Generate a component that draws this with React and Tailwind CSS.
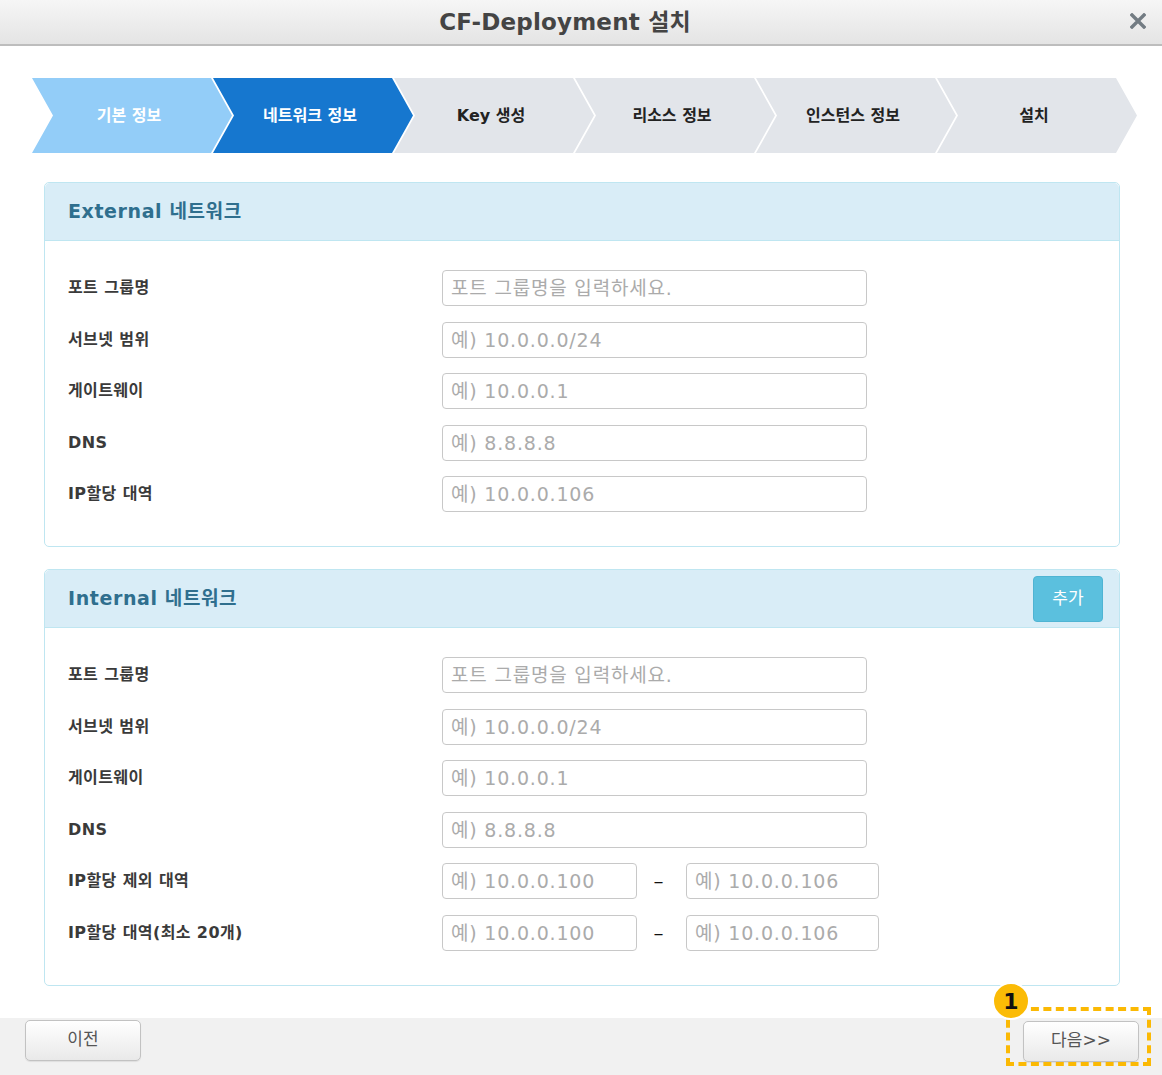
import React from 'react';

const steps = [
  { label: '기본 정보', bg: 'bg-[#93cdf8]', text: 'text-white' },
  { label: '네트워크 정보', bg: 'bg-[#1677cf]', text: 'text-white' },
  { label: 'Key 생성', bg: 'bg-[#e2e5ea]', text: 'text-[#222]' },
  { label: '리소스 정보', bg: 'bg-[#e2e5ea]', text: 'text-[#222]' },
  { label: '인스턴스 정보', bg: 'bg-[#e2e5ea]', text: 'text-[#222]' },
  { label: '설치', bg: 'bg-[#e2e5ea]', text: 'text-[#222]' },
];

const FONT = "font-['DejaVu_Sans','Noto_Sans_CJK_KR',sans-serif]";

const Field = ({ placeholder, width = 'w-[425px]' }) => (
  <input
    readOnly
    placeholder={placeholder}
    className={`${width} h-[36px] rounded-[4px] border border-[#c8c8c8] bg-white pl-[8px] text-[19px] tracking-[0.8px] outline-none placeholder:text-[#ababab] ${FONT}`}
  />
);

const Row = ({ label, children }) => (
  <div className="flex items-center">
    <div className={`w-[374px] text-[16px] font-bold text-[#3a3a3a] tracking-[0.4px] ${FONT}`}>{label}</div>
    {children}
  </div>
);

const RangeRow = ({ label }) => (
  <Row label={label}>
    <Field placeholder="예) 10.0.0.100" width="w-[195px]" />
    <div className="w-[49px] pr-[6px] text-center text-[20px] leading-none text-[#111]">–</div>
    <Field placeholder="예) 10.0.0.106" width="w-[193px]" />
  </Row>
);

const Panel = ({ title, action, children }) => (
  <div className="ml-[44px] w-[1076px] rounded-[5px] border border-[#bfe6f1] bg-white">
    <div className="flex h-[58px] items-center justify-between rounded-t-[5px] border-b border-[#bfe6f1] bg-[#d9edf7] pl-[23px] pr-[16px]">
      <div className={`text-[19px] font-bold text-[#2f6f8e] tracking-[0.6px] ${FONT}`}>{title}</div>
      {action}
    </div>
    <div className="flex flex-col gap-[15.5px] pl-[23px] pt-[29px] pb-[34px]">{children}</div>
  </div>
);

export default function App() {
  return (
    <div className={`relative h-[1075px] w-[1162px] overflow-hidden bg-white ${FONT}`}>
      {/* Title bar */}
      <div className="relative flex h-[46px] items-center justify-center border-b-2 border-[#bdbdbd] bg-gradient-to-b from-[#f6f6f6] to-[#e4e4e4] pr-[32px]">
        <div className="text-[23px] font-bold text-[#444] tracking-[0.2px]">CF-Deployment 설치</div>
        <svg className="absolute right-[16px] top-[13px]" width="16" height="16" viewBox="0 0 16 16">
          <path d="M2 2 L14 14 M14 2 L2 14" stroke="#737c83" strokeWidth="3.4" strokeLinecap="square" />
        </svg>
      </div>

      {/* Steps */}
      <div className="mt-[32px] flex pl-[32px]">
        {steps.map((s, i) => (
          <div
            key={s.label}
            className={`flex h-[75px] w-[200px] shrink-0 items-center justify-center ${s.bg} ${i > 0 ? '-ml-[19px]' : ''} [clip-path:polygon(0_0,179px_0,200px_50%,179px_100%,0_100%,21px_50%)]`}
          >
            <span className={`pr-[6px] text-[16px] font-bold ${s.text}`}>{s.label}</span>
          </div>
        ))}
      </div>

      {/* External */}
      <div className="mt-[29px]">
        <Panel title="External 네트워크">
          <Row label="포트 그룹명"><Field placeholder="포트 그룹명을 입력하세요." /></Row>
          <Row label="서브넷 범위"><Field placeholder="예) 10.0.0.0/24" /></Row>
          <Row label="게이트웨이"><Field placeholder="예) 10.0.0.1" /></Row>
          <Row label="DNS"><Field placeholder="예) 8.8.8.8" /></Row>
          <Row label="IP할당 대역"><Field placeholder="예) 10.0.0.106" /></Row>
        </Panel>
      </div>

      {/* Internal */}
      <div className="mt-[22px]">
        <Panel
          title="Internal 네트워크"
          action={
            <button className="h-[46px] w-[70px] rounded-[4px] border border-[#4fb4d3] bg-[#5bc0de] text-[17px] text-white">
              추가
            </button>
          }
        >
          <Row label="포트 그룹명"><Field placeholder="포트 그룹명을 입력하세요." /></Row>
          <Row label="서브넷 범위"><Field placeholder="예) 10.0.0.0/24" /></Row>
          <Row label="게이트웨이"><Field placeholder="예) 10.0.0.1" /></Row>
          <Row label="DNS"><Field placeholder="예) 8.8.8.8" /></Row>
          <RangeRow label="IP할당 제외 대역" />
          <RangeRow label="IP할당 대역(최소 20개)" />
        </Panel>
      </div>

      {/* Footer */}
      <div className="mt-[32px] flex h-[60px] items-start justify-between bg-[#f1f1f1] px-[23px] pt-[2px]">
        <button className="ml-[2px] h-[41px] w-[116px] rounded-[5px] border border-[#c2c2c2] bg-gradient-to-b from-white to-[#e9e9e9] text-[17px] text-[#555] shadow-[0_1px_1px_rgba(0,0,0,0.08)]">
          이전
        </button>
        <button className="mt-[1px] h-[41px] w-[116px] rounded-[5px] border border-[#c2c2c2] bg-gradient-to-b from-white to-[#e9e9e9] text-[17px] text-[#555] shadow-[0_1px_1px_rgba(0,0,0,0.08)]">
          다음&gt;&gt;
        </button>
      </div>

      {/* Highlight */}
      <div className="absolute left-[1006px] top-[1007px] h-[59px] w-[145px] border-4 border-dashed border-[#fbb904]" />
      <div className="absolute left-[992px] top-[982px] flex h-[38px] w-[38px] items-center justify-center rounded-full border-2 border-white bg-[#fbbb06] text-[22px] font-bold text-[#111]">
        1
      </div>
    </div>
  );
}
